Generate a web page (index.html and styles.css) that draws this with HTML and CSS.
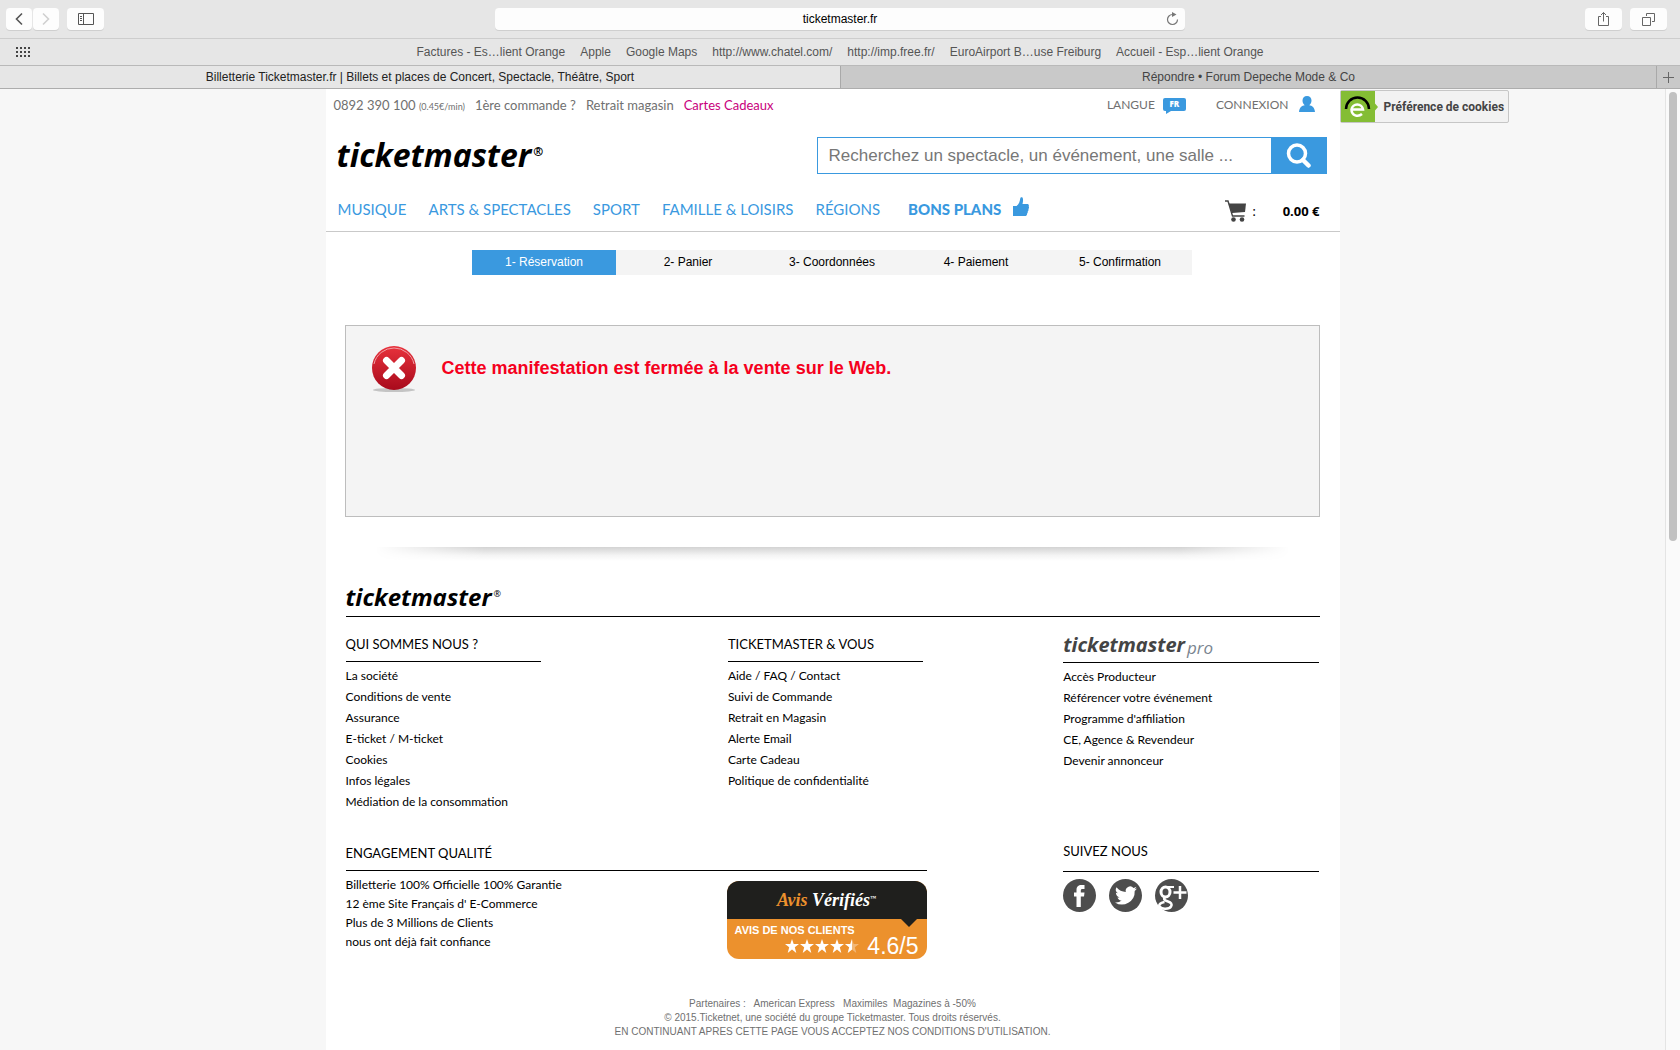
FILE: index.html
```html
<!DOCTYPE html>
<html lang="fr">
<head>
    <meta charset="UTF-8">
    <meta name="viewport" content="width=device-width, initial-scale=1.0">
    <title>Billetterie Ticketmaster.fr | Billets et places de Concert, Spectacle, Théâtre, Sport</title>
    <link rel="stylesheet" href="styles.css">
</head>
<body>
    <div class="browser">
        <div class="toolbar">
            <div class="toolbar-side">
                <div class="history">
                    <button class="tool-btn small" aria-label="Page précédente">
                        <svg width="8" height="14" viewBox="0 0 8 14"><path d="M7 1.5L1.5 7L7 12.5" fill="none" stroke="#555" stroke-width="1.6"/></svg>
                    </button>
                    <button class="tool-btn small" aria-label="Page suivante" disabled>
                        <svg width="8" height="14" viewBox="0 0 8 14"><path d="M1 1.5L6.5 7L1 12.5" fill="none" stroke="#d0d0d0" stroke-width="1.6"/></svg>
                    </button>
                </div>
                <button class="tool-btn" aria-label="Barre latérale">
                    <svg width="16" height="12" viewBox="0 0 16 12"><path d="M.5.5h15v11H.5zM5.5.5v11M2 3.5h2M2 5.5h2M2 7.5h2" fill="none" stroke="#555"/></svg>
                </button>
            </div>
            <div class="address">
                <input type="text" value="ticketmaster.fr" aria-label="Adresse">
                <button class="reload" aria-label="Recharger">
                    <svg width="13" height="14" viewBox="0 0 13 14"><path d="M6.5 2.5a5 5 0 1 0 5 5" fill="none" stroke="#777" stroke-width="1.2"/><path d="M6 0l4.5 2.5L6 5z" fill="#777"/></svg>
                </button>
            </div>
            <div class="toolbar-side right">
                <button class="tool-btn" aria-label="Partager">
                    <svg width="13" height="16" viewBox="0 0 13 16"><path d="M4 5.500H1.500v9h10v-9H9M6.500 10.500V1.500M4 4l2.500-2.500L9 4" fill="none" stroke="#666"/></svg>
                </button>
                <button class="tool-btn" aria-label="Onglets">
                    <svg width="13" height="13" viewBox="0 0 13 13"><path d="M.5 4.500h8v8h-8zM4.500 3V.5h8v8H10" fill="none" stroke="#666"/></svg>
                </button>
            </div>
        </div>

        <nav class="bookmarks">
            <svg class="grid-icon" width="14" height="10" viewBox="0 0 14 10"><path d="M0 1h14M0 5h14M0 9h14" stroke="#444" stroke-width="2" stroke-dasharray="2 2"/></svg>
            <a href="#">Factures - Es…lient Orange</a>
            <a href="#">Apple</a>
            <a href="#">Google Maps</a>
            <a href="#">http://www.chatel.com/</a>
            <a href="#">http://imp.free.fr/</a>
            <a href="#">EuroAirport B…use Freiburg</a>
            <a href="#">Accueil - Esp…lient Orange</a>
        </nav>

        <div class="tabs">
            <button class="tab active">Billetterie Ticketmaster.fr | Billets et places de Concert, Spectacle, Théâtre, Sport</button>
            <button class="tab">Répondre • Forum Depeche Mode &amp; Co</button>
            <button class="new-tab" aria-label="Nouvel onglet">
                <svg width="11" height="11" viewBox="0 0 11 11"><path d="M0 5.500h11M5.500 0v11" stroke="#666"/></svg>
            </button>
        </div>
    </div>

    <div class="viewport">
        <div class="page">
            <header>
                <div class="top-links">
                    <span>0892 390 100 <small>(0.45€/min)</small></span>
                    <a href="#">1ère commande ?</a>
                    <a href="#">Retrait magasin</a>
                    <a href="#" class="gift">Cartes Cadeaux</a>
                    <a href="#" class="langue">LANGUE
                        <span class="flag">FR</span>
                    </a>
                    <a href="#" class="connexion">CONNEXION
                        <svg width="16" height="16" viewBox="0 0 16 16"><path d="M8 0c2.800 0 4.500 2 4.500 4.600 0 2-.9 3.700-2.200 4.600 2.700.4 5.200 1.700 5.700 6.800H0c.5-5.100 3-6.400 5.700-6.800C4.400 8.300 3.500 6.600 3.500 4.600 3.500 2 5.200 0 8 0z" fill="#3a99df"/></svg>
                    </a>
                </div>

                <div class="brand-row">
                    <a href="#" class="logo">ticketmaster<sup>®</sup></a>
                    <form class="search">
                        <input type="text" placeholder="Recherchez un spectacle, un événement, une salle ..." aria-label="Recherche">
                        <button type="button" aria-label="Rechercher">
                            <svg width="26" height="26" viewBox="0 0 26 26"><circle cx="12" cy="11.500" r="8.500" fill="none" stroke="#fff" stroke-width="3.500"/><path d="M18 18l5.500 5.500" stroke="#fff" stroke-width="4.500" stroke-linecap="round"/></svg>
                        </button>
                    </form>
                </div>

                <nav class="main-nav">
                    <a href="#">MUSIQUE</a>
                    <a href="#">ARTS &amp; SPECTACLES</a>
                    <a href="#">SPORT</a>
                    <a href="#">FAMILLE &amp; LOISIRS</a>
                    <a href="#">RÉGIONS</a>
                    <a href="#" class="bons-plans">BONS PLANS
                        <svg width="16" height="20" viewBox="0 0 16 20"><path d="M0 9h3.500C6 7.500 6.800 4 7.300 1.200 7.500.2 8.300 0 9 .2c1.300.5 1.300 3.300.5 6.800h4.800c1.300 0 1.900 1.200 1.400 2.300.5.8.4 1.900-.3 2.600.3.900.1 1.900-.7 2.500.2.900 0 1.800-.7 2.400.1 1.600-.8 2.300-2 2.300H5L3.500 19H0z" fill="#3a99df"/></svg>
                    </a>
                    <a href="#" class="cart">
                        <svg width="22" height="22" viewBox="0 0 22 22"><path d="M3.500 3.500H21l-1 8.500-13 1z" fill="#444"/><path d="M0 1h3l4.500 15H19.500" fill="none" stroke="#444" stroke-width="1.400"/><circle cx="8.500" cy="19.500" r="2.300" fill="#444"/><circle cx="17" cy="19.500" r="2.300" fill="#444"/></svg>
                        <span>:</span>
                        <strong>0.00 €</strong>
                    </a>
                </nav>
            </header>

            <main>
                <ol class="steps">
                    <li class="current">1- Réservation</li>
                    <li>2- Panier</li>
                    <li>3- Coordonnées</li>
                    <li>4- Paiement</li>
                    <li>5- Confirmation</li>
                </ol>

                <div class="error-box">
                    <svg width="46" height="48" viewBox="0 0 46 48">
                        <defs>
                            <linearGradient id="red" x1="0" y1="0" x2="0" y2="1">
                                <stop offset="0" stop-color="#e8323c"/>
                                <stop offset="1" stop-color="#a80a1c"/>
                            </linearGradient>
                        </defs>
                        <ellipse cx="23" cy="45" rx="21" ry="2" fill="#c4c4c4"/>
                        <circle cx="23" cy="23" r="22" fill="url(#red)"/>
                        <path d="M3 19a20.500 20.500 0 0 1 40 0" fill="none" stroke="#f0a0a5" stroke-width="1"/>
                        <path d="M15.500 15.500l15 15M30.500 15.500l-15 15" stroke="#fff" stroke-width="7" stroke-linecap="round"/>
                    </svg>
                    <p>Cette manifestation est fermée à la vente sur le Web.</p>
                </div>
                <div class="shadow"></div>
            </main>

            <footer>
                <div class="footer-brand">
                    <a href="#" class="logo logo-small">ticketmaster<sup>®</sup></a>
                </div>

                <div class="footer-cols">
                    <section>
                        <h2>QUI SOMMES NOUS ?</h2>
                        <ul>
                            <li><a href="#">La société</a></li>
                            <li><a href="#">Conditions de vente</a></li>
                            <li><a href="#">Assurance</a></li>
                            <li><a href="#">E-ticket / M-ticket</a></li>
                            <li><a href="#">Cookies</a></li>
                            <li><a href="#">Infos légales</a></li>
                            <li><a href="#">Médiation de la consommation</a></li>
                        </ul>
                    </section>
                    <section>
                        <h2>TICKETMASTER &amp; VOUS</h2>
                        <ul>
                            <li><a href="#">Aide / FAQ / Contact</a></li>
                            <li><a href="#">Suivi de Commande</a></li>
                            <li><a href="#">Retrait en Magasin</a></li>
                            <li><a href="#">Alerte Email</a></li>
                            <li><a href="#">Carte Cadeau</a></li>
                            <li><a href="#">Politique de confidentialité</a></li>
                        </ul>
                    </section>
                    <section class="wide">
                        <h2 class="logo logo-pro">ticketmaster<span>pro</span></h2>
                        <ul>
                            <li><a href="#">Accès Producteur</a></li>
                            <li><a href="#">Référencer votre événement</a></li>
                            <li><a href="#">Programme d'affiliation</a></li>
                            <li><a href="#">CE, Agence &amp; Revendeur</a></li>
                            <li><a href="#">Devenir annonceur</a></li>
                        </ul>
                    </section>
                </div>

                <div class="footer-cols second">
                    <section class="quality">
                        <h2>ENGAGEMENT QUALITÉ</h2>
                        <div class="quality-body">
                            <p>Billetterie 100% Officielle 100% Garantie<br>
                            12 ème Site Français d' E-Commerce<br>
                            Plus de 3 Millions de Clients<br>
                            nous ont déjà fait confiance</p>
                            <a href="#" class="avis">
                                <span class="avis-top"><b>Avis</b> Vérifiés<small>™</small></span>
                                <span class="avis-bottom">
                                    <span class="avis-label">AVIS DE NOS CLIENTS</span>
                                    <span class="avis-score">
                                        <svg width="76" height="14" viewBox="0 0 76 14">
                                            <defs><path id="star" d="M7 0l1.700 5H14l-4.200 3.200L11.300 14 7 10.500 2.700 14l1.500-5.800L0 5h5.300z"/></defs>
                                            <g fill="#fff">
                                                <use href="#star"/>
                                                <use href="#star" x="15"/>
                                                <use href="#star" x="30"/>
                                                <use href="#star" x="45"/>
                                                <path d="M67 0v10.500L62.700 14l1.500-5.800L60 5h5.300z"/>
                                                <use href="#star" x="60" fill-opacity=".35"/>
                                            </g>
                                        </svg>
                                        4.6/5
                                    </span>
                                </span>
                            </a>
                        </div>
                    </section>
                    <section class="wide follow">
                        <h2>SUIVEZ NOUS</h2>
                        <div class="social">
                            <a href="#" aria-label="Facebook">
                                <svg width="33" height="33" viewBox="0 0 33 33"><circle cx="16.500" cy="16.500" r="16.500" fill="#4d4d4d"/><path d="M13.500 28V17.500H11v-4h2.500V11c0-3.500 1.800-5 5-5h3v4h-2c-1.300 0-1.700.6-1.700 1.700v1.800h3.700l-.5 4h-3.200V28z" fill="#fff"/></svg>
                            </a>
                            <a href="#" aria-label="Twitter">
                                <svg width="33" height="33" viewBox="0 0 33 33"><circle cx="16.500" cy="16.500" r="16.500" fill="#4d4d4d"/><path transform="translate(5 5)" d="M23 4.600a9 9 0 0 1-2.600.7 4.500 4.500 0 0 0 2-2.500 9 9 0 0 1-2.900 1.100 4.500 4.500 0 0 0-7.700 4.100A12.800 12.800 0 0 1 2.500 3.300a4.500 4.500 0 0 0 1.400 6 4.500 4.500 0 0 1-2-.5c0 2.200 1.500 4 3.600 4.500a4.500 4.500 0 0 1-2 .1 4.500 4.500 0 0 0 4.200 3.100A9 9 0 0 1 1 18.400 12.800 12.800 0 0 0 20.700 7a9 9 0 0 0 2.300-2.400z" fill="#fff"/></svg>
                            </a>
                            <a href="#" aria-label="Google+">
                                <svg width="33" height="33" viewBox="0 0 33 33">
                                    <circle cx="16.500" cy="16.500" r="16.500" fill="#4d4d4d"/>
                                    <g fill="none" stroke="#fff">
                                        <ellipse cx="10.500" cy="13" rx="4.500" ry="5" stroke-width="3"/>
                                        <path d="M11 8h8" stroke-width="2"/>
                                        <path d="M10 18.500c-2 2 0 3 3 4s4.500 2.500 3 5-9 3.500-11.500 0c-1-2.500 2-4 5-4.500" stroke-width="2.500"/>
                                        <path d="M18.500 13.500H31.500M25 7v13" stroke-width="2.500"/>
                                    </g>
                                </svg>
                            </a>
                        </div>
                    </section>
                </div>

                <div class="legal">
                    <p>Partenaires :&nbsp;&nbsp; American Express&nbsp;&nbsp; Maximiles&nbsp; Magazines à -50%</p>
                    <p>© 2015.Ticketnet, une société du groupe Ticketmaster. Tous droits réservés.</p>
                    <p>EN CONTINUANT APRES CETTE PAGE VOUS ACCEPTEZ NOS CONDITIONS D'UTILISATION.</p>
                </div>
            </footer>
        </div>

        <button class="cookies">
            <svg width="37" height="31" viewBox="0 0 37 31">
                <path d="M0 0h34v12.500l3 3.500-3 3.500V31H0z" fill="#84bd34"/>
                <path d="M5 18a11.500 11.500 0 0 1 23 0" fill="none" stroke="#000" stroke-width="2.500"/>
                <path d="M11 18.500H22a5.800 5.800 0 0 0-11.500 0c0 6 6.500 8 10.500 4.500" fill="none" stroke="#fff" stroke-width="2.500"/>
            </svg>
            Préférence de cookies
        </button>

        <div class="scrollbar"><div class="thumb"></div></div>
    </div>
</body>
</html>
```
FILE: styles.css
```css
* {
    box-sizing: border-box;
}

body {
    margin: 0;
    min-height: 100vh;
    display: flex;
    flex-direction: column;
    background-color: #f7f7f7;
    font-family: Lato, sans-serif;
    font-size: 12px;
    color: #000;
}

a {
    color: inherit;
    text-decoration: none;
}

button {
    margin: 0;
    padding: 0;
    border: none;
    background: none;
    font: inherit;
    color: inherit;
    cursor: pointer;
}

svg {
    display: block;
    flex: none;
}

h2, p, ul, ol {
    margin: 0;
    padding: 0;
    font-weight: normal;
    list-style: none;
}

/* Browser window */
.browser {
    background-color: #e6e6e6;
    font-family: "Liberation Sans", Arial, sans-serif;
}

.toolbar {
    display: grid;
    grid-template-columns: 1fr minmax(0, 690px) 1fr;
    align-items: center;
    height: 39px;
    border-bottom: 1px solid #cdcdcd;
}

.toolbar-side {
    display: flex;
    gap: 8px;
    padding-left: 6px;
}

.toolbar-side.right {
    justify-content: flex-end;
    padding-right: 13px;
}

.history {
    display: flex;
    gap: 1px;
}

.tool-btn {
    display: flex;
    align-items: center;
    justify-content: center;
    width: 37px;
    height: 22px;
    border-radius: 4px;
    background-color: #fdfdfd;
    box-shadow: 0 1px 0 #cfcfcf;
}

.tool-btn.small {
    width: 26px;
}

.address {
    position: relative;
}

.address input {
    display: block;
    width: 100%;
    height: 22px;
    border: none;
    border-radius: 4px;
    background-color: #fdfdfd;
    box-shadow: 0 1px 0 #cfcfcf;
    font-family: inherit;
    font-size: 12px;
    text-align: center;
}

.reload {
    position: absolute;
    top: 4px;
    right: 6px;
}

.bookmarks {
    display: flex;
    justify-content: center;
    align-items: center;
    gap: 15px;
    position: relative;
    height: 27px;
    border-bottom: 1px solid #b9b9b9;
    font-size: 12px;
    color: #555;
}

.grid-icon {
    position: absolute;
    left: 16px;
}

.tabs {
    display: flex;
    height: 23px;
    border-bottom: 1px solid #adadad;
    font-size: 12px;
}

.tab {
    flex: 1;
    background-color: #c9c9c9;
    color: #444;
}

.tab.active {
    flex: 0 0 50%;
    background-color: #e6e6e6;
    color: #222;
}

.tab + .tab, .new-tab {
    border-left: 1px solid #a9a9a9;
}

.new-tab {
    display: flex;
    align-items: center;
    justify-content: center;
    width: 24px;
    background-color: #c9c9c9;
}

/* Page */
.viewport {
    flex: 1;
    display: grid;
    grid-template-columns: 1fr minmax(0, 1014px) 1fr 15px;
    align-items: start;
}

.page {
    grid-column: 2;
    background-color: #fff;
}

.top-links {
    display: flex;
    align-items: center;
    gap: 10px;
    height: 32px;
    padding: 0 25px 0 8px;
    font-size: 13px;
    color: #707070;
}

.top-links small {
    font-size: 9px;
}

.gift {
    color: #c8007c;
}

.langue, .connexion {
    display: flex;
    align-items: center;
    gap: 8px;
    padding-bottom: 2px;
    font-size: 12px;
}

.langue {
    margin-left: auto;
}

.connexion {
    margin-left: 20px;
    gap: 10px;
}

.flag {
    position: relative;
    width: 23px;
    height: 13px;
    border-radius: 2px;
    background-color: #3a99df;
    font-family: "Open Sans", sans-serif;
    font-size: 8px;
    font-weight: 800;
    line-height: 12px;
    text-align: center;
    color: #fff;
}

.flag::after {
    content: "";
    position: absolute;
    left: 3px;
    top: 13px;
    border-top: 3px solid #3a99df;
    border-right: 5px solid transparent;
}

.brand-row {
    display: flex;
    justify-content: space-between;
    align-items: center;
    height: 68px;
    padding: 0 13px 0 11px;
}

.logo {
    display: flex;
    align-items: center;
    font-family: "Open Sans", sans-serif;
    font-size: 32px;
    font-weight: 700;
    font-style: italic;
    line-height: 36px;
}

.logo sup {
    padding: 0 0 6px 2px;
    font-size: 12px;
    font-style: normal;
    line-height: 12px;
}

.search {
    display: flex;
    width: 510px;
    height: 37px;
    border: 1px solid #3a99df;
}

.search input {
    flex: 1;
    min-width: 0;
    border: none;
    padding: 2px 11px 0;
    font-family: "Liberation Sans", Arial, sans-serif;
    font-size: 17px;
}

.search input::placeholder {
    color: #777;
}

.search button {
    display: flex;
    align-items: center;
    justify-content: center;
    width: 55px;
    background-color: #3a99df;
}

.main-nav {
    display: flex;
    align-items: center;
    gap: 22px;
    height: 43px;
    padding: 0 20px 2px 12px;
    border-bottom: 1px solid #c9c9c9;
    font-size: 15px;
    color: #3a99df;
}

.bons-plans {
    display: flex;
    align-items: center;
    gap: 12px;
    margin-left: 6px;
    font-weight: 900;
}

.bons-plans svg {
    margin-bottom: 4px;
}

.cart {
    display: flex;
    align-items: center;
    gap: 5px;
    margin-left: auto;
    padding-top: 3px;
    font-size: 13px;
    color: #000;
}

.cart strong {
    padding-left: 22px;
    font-family: "Open Sans", sans-serif;
}

main {
    padding: 18px 20px 0 19px;
}

.steps {
    display: flex;
    max-width: 720px;
    margin: 0 auto;
    background-color: #f4f4f4;
    font-family: "Liberation Sans", Arial, sans-serif;
    line-height: 25px;
    text-align: center;
}

.steps li {
    flex: 1;
}

.steps .current {
    background-color: #3a99df;
    color: #fff;
}

.error-box {
    display: flex;
    align-items: flex-start;
    gap: 25px;
    min-height: 192px;
    margin-top: 50px;
    padding: 19px 25px;
    border: 1px solid #bdbdbd;
    background-color: #f4f4f4;
}

.error-box p {
    font-family: "Liberation Sans", Arial, sans-serif;
    font-size: 18px;
    font-weight: bold;
    line-height: 46px;
    color: #f5001d;
}

.shadow {
    height: 14px;
    margin: 30px 30px 0;
    background: linear-gradient(#d3d3d3, #f4f4f4 60%, #fff);
    mask-image: linear-gradient(to right, transparent, #000 12%, #000 88%, transparent);
}

/* Footer */
footer {
    padding: 21px 20px 11px;
}

.footer-brand {
    padding-bottom: 4px;
    border-bottom: 1px solid #000;
}

.logo-small {
    font-size: 24px;
    line-height: 30px;
}

.logo-small sup {
    font-size: 9px;
    font-weight: 400;
}

.footer-cols {
    display: grid;
    grid-template-columns: 382fr 335fr 256fr;
    padding-top: 16px;
}

.footer-cols section {
    width: 195px;
}

.footer-cols section.wide {
    width: auto;
}

.footer-cols section.quality {
    grid-column: span 2;
    width: 581px;
}

.footer-cols h2 {
    height: 29px;
    border-bottom: 1px solid #000;
    font-size: 13px;
    line-height: 22px;
}

.footer-cols ul {
    padding-top: 3px;
    line-height: 21px;
}

.footer-cols .logo-pro {
    height: 30px;
    padding-bottom: 6px;
    font-size: 20px;
    color: #444;
}

.logo-pro span {
    padding: 6px 0 0 2px;
    font-size: 17px;
    font-weight: 400;
    color: #7a8590;
}

.footer-cols.second {
    padding-top: 30px;
}

.footer-cols .follow h2 {
    height: 30px;
    line-height: 18px;
}

.quality-body {
    display: flex;
    justify-content: space-between;
    padding-top: 4px;
    line-height: 19px;
}

.avis {
    display: block;
    width: 200px;
    margin-top: 6px;
    border-radius: 12px;
    overflow: hidden;
    background-color: #ec912d;
    color: #fff;
}

.avis-top {
    display: block;
    position: relative;
    background-color: #1f1f1d;
    font-family: "Liberation Serif", serif;
    font-size: 18px;
    font-style: italic;
    font-weight: bold;
    line-height: 38px;
    text-align: center;
}

.avis-top b {
    color: #ec912d;
}

.avis-top small {
    font-size: 6px;
    line-height: 6px;
    vertical-align: 6px;
}

.avis-top::after {
    content: "";
    position: absolute;
    right: 10px;
    top: 38px;
    border: 8px solid transparent;
    border-top-color: #1f1f1d;
    border-bottom: none;
}

.avis-bottom {
    display: block;
    padding: 4px 8px 4px;
    font-family: "Liberation Sans", Arial, sans-serif;
}

.avis-label {
    display: block;
    font-size: 11px;
    font-weight: bold;
    line-height: 14px;
}

.avis-score {
    display: flex;
    align-items: center;
    justify-content: flex-end;
    gap: 6px;
    font-size: 23px;
    line-height: 18px;
}

.social {
    display: flex;
    gap: 13px;
    padding-top: 7px;
}

.legal {
    padding-top: 38px;
    font-family: "Liberation Sans", Arial, sans-serif;
    font-size: 10px;
    line-height: 14px;
    text-align: center;
    color: #707070;
}

/* Cookie widget and scrollbar */
.cookies {
    display: flex;
    align-items: center;
    justify-self: start;
    gap: 6px;
    height: 33px;
    margin-top: 1px;
    padding-right: 4px;
    border: 1px solid #c6c6c6;
    border-radius: 2px;
    background-color: #f2f2f2;
    font-family: Roboto, sans-serif;
    font-size: 12px;
    font-weight: bold;
    color: #444;
}

.scrollbar {
    align-self: stretch;
    padding: 3px 3px 0;
    border-left: 1px solid #e4e4e4;
    background-color: #fafafa;
}

.thumb {
    width: 8px;
    height: 449px;
    border-radius: 4px;
    background-color: #c1c1c1;
}
```
